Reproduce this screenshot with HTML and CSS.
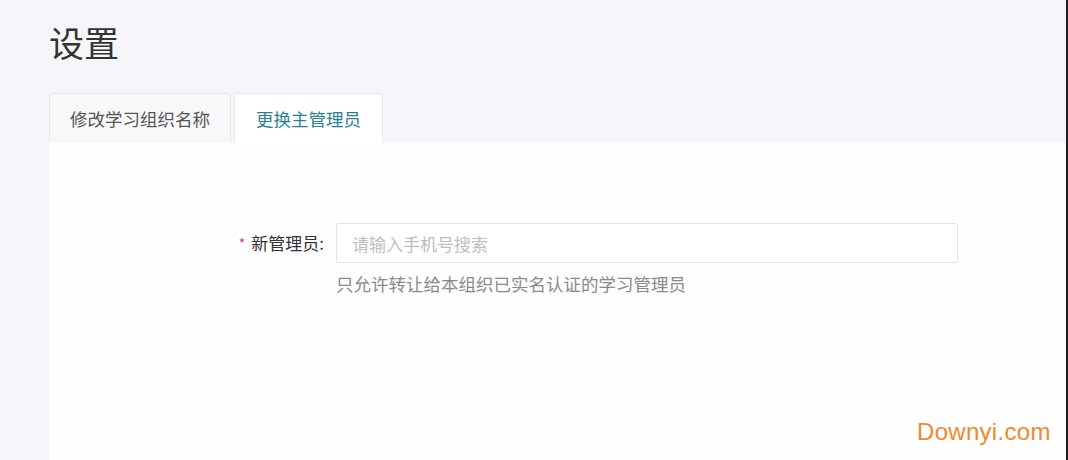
FILE: index.html
```html
<!DOCTYPE html>
<html lang="zh-CN">
<head>
    <meta charset="UTF-8">
    <title>设置</title>
    <link rel="stylesheet" href="styles.css">
</head>
<body>
    <div class="page">
        <h1 class="title">设置</h1>

        <div class="tabs">
            <div class="tab">修改学习组织名称</div>
            <div class="tab active">更换主管理员</div>
        </div>

        <div class="panel">
            <div class="form-row">
                <label class="label"><span class="req">*</span>新管理员:</label>
                <div class="field">
                    <input type="text" placeholder="请输入手机号搜索">
                    <p class="hint">只允许转让给本组织已实名认证的学习管理员</p>
                </div>
            </div>
        </div>
    </div>

    <div class="watermark">Downyi.com</div>
</body>
</html>
```

FILE: styles.css
```css
body {
    margin: 0;
    padding: 0;
    background: #f6f5f9;
    font-family: "Noto Sans CJK SC", "Noto Sans", sans-serif;
    color: #333;
    height: 460px;
    overflow: hidden;
    border-right: 2px solid #1e1e1e;
}

.page {
    padding-left: 49px;
    height: 100%;
    display: flex;
    flex-direction: column;
}

.title {
    margin: 17px 0 0 0;
    font-size: 35px;
    font-weight: 400;
    line-height: 50px;
    color: #333;
}

.tabs {
    display: flex;
    gap: 3px;
    margin-top: 26px;
}

.tab {
    height: 49px;
    line-height: 49px;
    padding: 0 20px;
    font-size: 17.5px;
    color: #555;
    background: #f8f7fa;
    border: 1px solid #e9e8ee;
    border-bottom: none;
    border-radius: 3px 3px 0 0;
}

.tab.active {
    background: #fff;
    color: #2a7f98;
    padding: 0 21px;
}

.panel {
    flex: 1;
    background: #fefdff;
    padding-top: 80px;
}

.form-row {
    display: flex;
    align-items: flex-start;
}

.label {
    width: 275px;
    text-align: right;
    font-size: 17px;
    line-height: 40px;
    color: #333;
    padding-right: 12px;
}

.req {
    color: #c9494a;
    font-size: 14px;
    margin-right: 6px;
    vertical-align: 1px;
}

.field {
    display: flex;
    flex-direction: column;
}

input {
    width: 622px;
    height: 40px;
    box-sizing: border-box;
    padding: 0 15px;
    border: 1px solid #e2e1e6;
    border-radius: 3px;
    font-family: inherit;
    font-size: 17px;
    color: #333;
    background: #fff;
    outline: none;
}

input::placeholder {
    color: #bdbdc2;
}

.hint {
    margin: 8px 0 0;
    font-size: 17.5px;
    line-height: 26px;
    color: #8a8a8a;
}

.watermark {
    position: absolute;
    left: 917px;
    top: 418px;
    font-family: "Liberation Sans", Arial, sans-serif;
    font-size: 24px;
    color: #f08a28;
    letter-spacing: 0.3px;
}
```
